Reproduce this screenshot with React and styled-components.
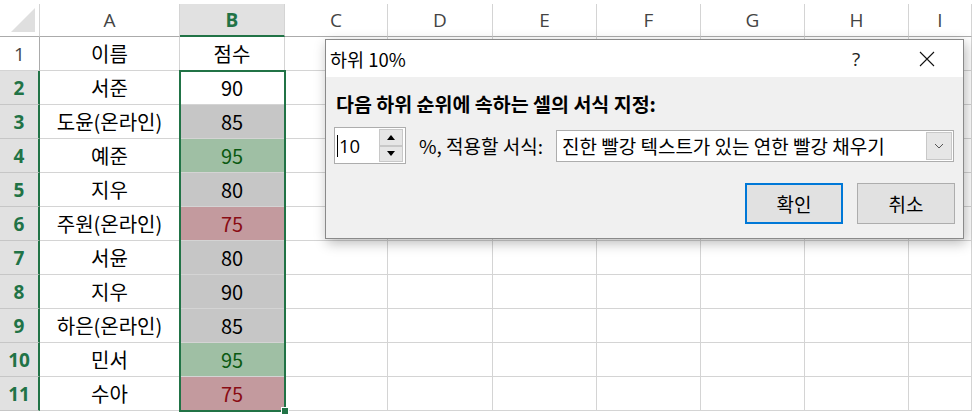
import React from "react";
import styled, { createGlobalStyle } from "styled-components";

const Global = createGlobalStyle`
  html, body { margin: 0; padding: 0; background: #fff; }
  body { width: 972px; height: 418px; overflow: hidden; }
`;

const COLS = [40, 140, 105, 103, 105, 104, 104, 104, 104, 63];
const LETTERS = ["A", "B", "C", "D", "E", "F", "G", "H", "I"];

const data = [
  ["서준", "90", "active"],
  ["도윤(온라인)", "85", "gray"],
  ["예준", "95", "green"],
  ["지우", "80", "gray"],
  ["주원(온라인)", "75", "red"],
  ["서윤", "80", "gray"],
  ["지우", "90", "gray"],
  ["하은(온라인)", "85", "gray"],
  ["민서", "95", "green"],
  ["수아", "75", "red"],
];

const fills = {
  active: { bg: "#ffffff", fg: "#000000" },
  gray: { bg: "#c6c6c6", fg: "#000000" },
  green: { bg: "#9fbfa4", fg: "#0b5a12" },
  red: { bg: "#c39a9e", fg: "#8a0c14" },
  none: { bg: "#ffffff", fg: "#000000" },
};

const Sheet = styled.div`
  position: relative;
  padding-top: 4px;
  display: grid;
  grid-template-columns: ${COLS.map((c) => c + "px").join(" ")};
  grid-template-rows: 33px repeat(11, 34px);
  font-family: "Noto Sans CJK KR", "Noto Sans", sans-serif;
`;

const Corner = styled.div`
  position: relative;
  border-right: 1px solid #d4d4d4;
  border-bottom: 1px solid #ababab;
  box-sizing: border-box;
  display: flex;
  align-items: flex-end;
  justify-content: flex-end;
  padding: 0 4px 4px 0;
`;

const ColHead = styled.div`
  box-sizing: border-box;
  display: flex;
  align-items: center;
  justify-content: center;
  border-right: 1px solid #d4d4d4;
  border-bottom: ${(p) => (p.$sel ? "2px solid #217346" : "1px solid #ababab")};
  background: ${(p) => (p.$sel ? "#e1e1e1" : "#ffffff")};
  color: ${(p) => (p.$sel ? "#217346" : "#444")};
  font-family: "Open Sans", "Noto Sans", sans-serif;
  font-weight: ${(p) => (p.$sel ? 700 : 400)};
  font-size: 19px;
  padding-top: ${(p) => (p.$sel ? "1px" : "0")};
`;

const RowHead = styled.div`
  box-sizing: border-box;
  display: flex;
  align-items: center;
  justify-content: center;
  border-bottom: 1px solid ${(p) => (p.$sel ? "#c6c6c6" : "#d4d4d4")};
  border-right: ${(p) => (p.$sel ? "2px solid #217346" : "1px solid #ababab")};
  background: ${(p) => (p.$sel ? "#e1e1e1" : "#ffffff")};
  color: ${(p) => (p.$sel ? "#217346" : "#444")};
  font-family: "Open Sans", "Noto Sans", sans-serif;
  font-weight: ${(p) => (p.$sel ? 700 : 400)};
  font-size: 19px;
`;

const Cell = styled.div`
  box-sizing: border-box;
  display: flex;
  align-items: center;
  justify-content: center;
  border-right: 1px solid #d4d4d4;
  border-bottom: 1px solid #d4d4d4;
  background: ${(p) => fills[p.$fill || "none"].bg};
  color: ${(p) => fills[p.$fill || "none"].fg};
  font-size: 20px;
  white-space: nowrap;
  overflow: visible;
`;

const Selection = styled.div`
  position: absolute;
  left: 179px;
  top: 70px;
  width: 107px;
  height: 342px;
  box-sizing: border-box;
  border: 2px solid #217346;
  pointer-events: none;
`;

const Handle = styled.div`
  position: absolute;
  right: -5px;
  bottom: -5px;
  width: 6px;
  height: 6px;
  background: #217346;
  border: 1px solid #fff;
`;

const Dialog = styled.div`
  position: absolute;
  left: 325px;
  top: 39px;
  width: 639px;
  height: 200px;
  box-sizing: border-box;
  border: 1px solid #8a8a8a;
  background: #f0f0f0;
  box-shadow: 2px 4px 12px rgba(0, 0, 0, 0.28);
  display: flex;
  flex-direction: column;
  font-family: "Noto Sans CJK KR", "Noto Sans", sans-serif;
  color: #000;
`;

const TitleBar = styled.div`
  height: 37px;
  background: #fff;
  display: flex;
  align-items: center;
  padding-left: 4px;
  font-size: 18.5px;
`;

const TitleText = styled.div`
  flex: 1;
`;

const Help = styled.div`
  width: 22px;
  text-align: center;
  font-size: 19px;
  color: #222;
  margin-right: 48px;
  font-family: "Open Sans", sans-serif;
`;

const CloseBtn = styled.div`
  width: 24px;
  display: flex;
  justify-content: center;
  margin-right: 24px;
`;

const Body = styled.div`
  flex: 1;
  padding: 15px 8px 0 10px;
  display: flex;
  flex-direction: column;
`;

const Heading = styled.div`
  font-weight: 700;
  font-size: 19.5px;
  height: 24px;
  line-height: 24px;
`;

const Row = styled.div`
  display: flex;
  align-items: center;
  margin-top: 11px;
  margin-left: -2px;
`;

const Spin = styled.div`
  width: 72px;
  height: 37px;
  box-sizing: border-box;
  border: 1px solid #adadad;
  background: #fff;
  display: flex;
  align-items: stretch;
`;

const SpinText = styled.div`
  flex: 1;
  display: flex;
  align-items: center;
  padding-left: 2px;
  font-family: "Open Sans", "Noto Sans", sans-serif;
  font-size: 18.5px;
`;

const Caret = styled.span`
  display: inline-block;
  width: 1px;
  height: 22px;
  background: #000;
  margin-right: 1px;
`;

const SpinBtns = styled.div`
  width: 24px;
  margin: 1px 2px 1px 0;
  display: flex;
  flex-direction: column;
`;

const SpinBtn = styled.div`
  flex: 1;
  box-sizing: border-box;
  border: 1px solid #c8c8c8;
  background: #e6e6e6;
  display: flex;
  align-items: center;
  justify-content: center;
`;

const Label = styled.div`
  font-size: 19px;
  margin-left: 13px;
  margin-right: 13px;
  white-space: nowrap;
`;

const Select = styled.div`
  width: 398px;
  height: 32px;
  box-sizing: border-box;
  border: 1px solid #adadad;
  background: #fff;
  display: flex;
  align-items: center;
  padding-left: 5px;
  font-size: 19px;
`;

const SelectText = styled.div`
  flex: 1;
  white-space: nowrap;
`;

const DropBtn = styled.div`
  width: 26px;
  height: 28px;
  margin-right: 1px;
  box-sizing: border-box;
  border: 1px solid #c8c8c8;
  background: #e6e6e6;
  display: flex;
  align-items: center;
  justify-content: center;
`;

const Buttons = styled.div`
  display: flex;
  justify-content: flex-end;
  gap: 14px;
  margin-top: 19px;
`;

const Button = styled.div`
  width: 98px;
  height: 41px;
  box-sizing: border-box;
  border: ${(p) => (p.$primary ? "2px solid #0078d7" : "1px solid #adadad")};
  background: #e1e1e1;
  display: flex;
  align-items: center;
  justify-content: center;
  font-size: 19px;
`;

const Tri = ({ up }) => (
  <svg width="10" height="6" viewBox="0 0 10 6">
    <path d={up ? "M1 6 L5 1 L9 6 Z" : "M1 0 L5 5 L9 0 Z"} fill="#000" />
  </svg>
);

export default function App() {
  const cells = [];
  cells.push(
    <Corner key="corner">
      <svg width="24" height="24" viewBox="0 0 24 24">
        <path d="M24 0 L24 24 L0 24 Z" fill="#dfdfdf" />
      </svg>
    </Corner>
  );
  COLS.slice(1).forEach((_, i) => {
    cells.push(
      <ColHead key={"h" + i} $sel={i === 1}>
        {LETTERS[i] || ""}
      </ColHead>
    );
  });
  for (let r = 1; r <= 11; r++) {
    const sel = r >= 2;
    cells.push(
      <RowHead key={"r" + r} $sel={sel}>
        {r}
      </RowHead>
    );
    const rec = r === 1 ? ["이름", "점수", "none"] : data[r - 2];
    COLS.slice(1).forEach((_, c) => {
      let content = "";
      let fill = "none";
      if (c === 0) content = rec[0];
      if (c === 1) {
        content = rec[1];
        fill = rec[2];
      }
      cells.push(
        <Cell key={r + "-" + c} $fill={fill}>
          {content}
        </Cell>
      );
    });
  }

  return (
    <>
      <Global />
      <Sheet>
        {cells}
        <Selection>
          <Handle />
        </Selection>
        <Dialog>
          <TitleBar>
            <TitleText>하위 10%</TitleText>
            <Help>?</Help>
            <CloseBtn>
              <svg width="16" height="16" viewBox="0 0 16 16">
                <path d="M1 1 L15 15 M15 1 L1 15" stroke="#111" strokeWidth="1.1" />
              </svg>
            </CloseBtn>
          </TitleBar>
          <Body>
            <Heading>다음 하위 순위에 속하는 셀의 서식 지정:</Heading>
            <Row>
              <Spin>
                <SpinText>
                  <Caret />
                  10
                </SpinText>
                <SpinBtns>
                  <SpinBtn>
                    <Tri up />
                  </SpinBtn>
                  <SpinBtn>
                    <Tri />
                  </SpinBtn>
                </SpinBtns>
              </Spin>
              <Label>%, 적용할 서식:</Label>
              <Select>
                <SelectText>진한 빨강 텍스트가 있는 연한 빨강 채우기</SelectText>
                <DropBtn>
                  <svg width="10" height="6" viewBox="0 0 10 6">
                    <path d="M1 1 L5 5 L9 1" stroke="#555" fill="none" strokeWidth="1" />
                  </svg>
                </DropBtn>
              </Select>
            </Row>
            <Buttons>
              <Button $primary>확인</Button>
              <Button>취소</Button>
            </Buttons>
          </Body>
        </Dialog>
      </Sheet>
    </>
  );
}
